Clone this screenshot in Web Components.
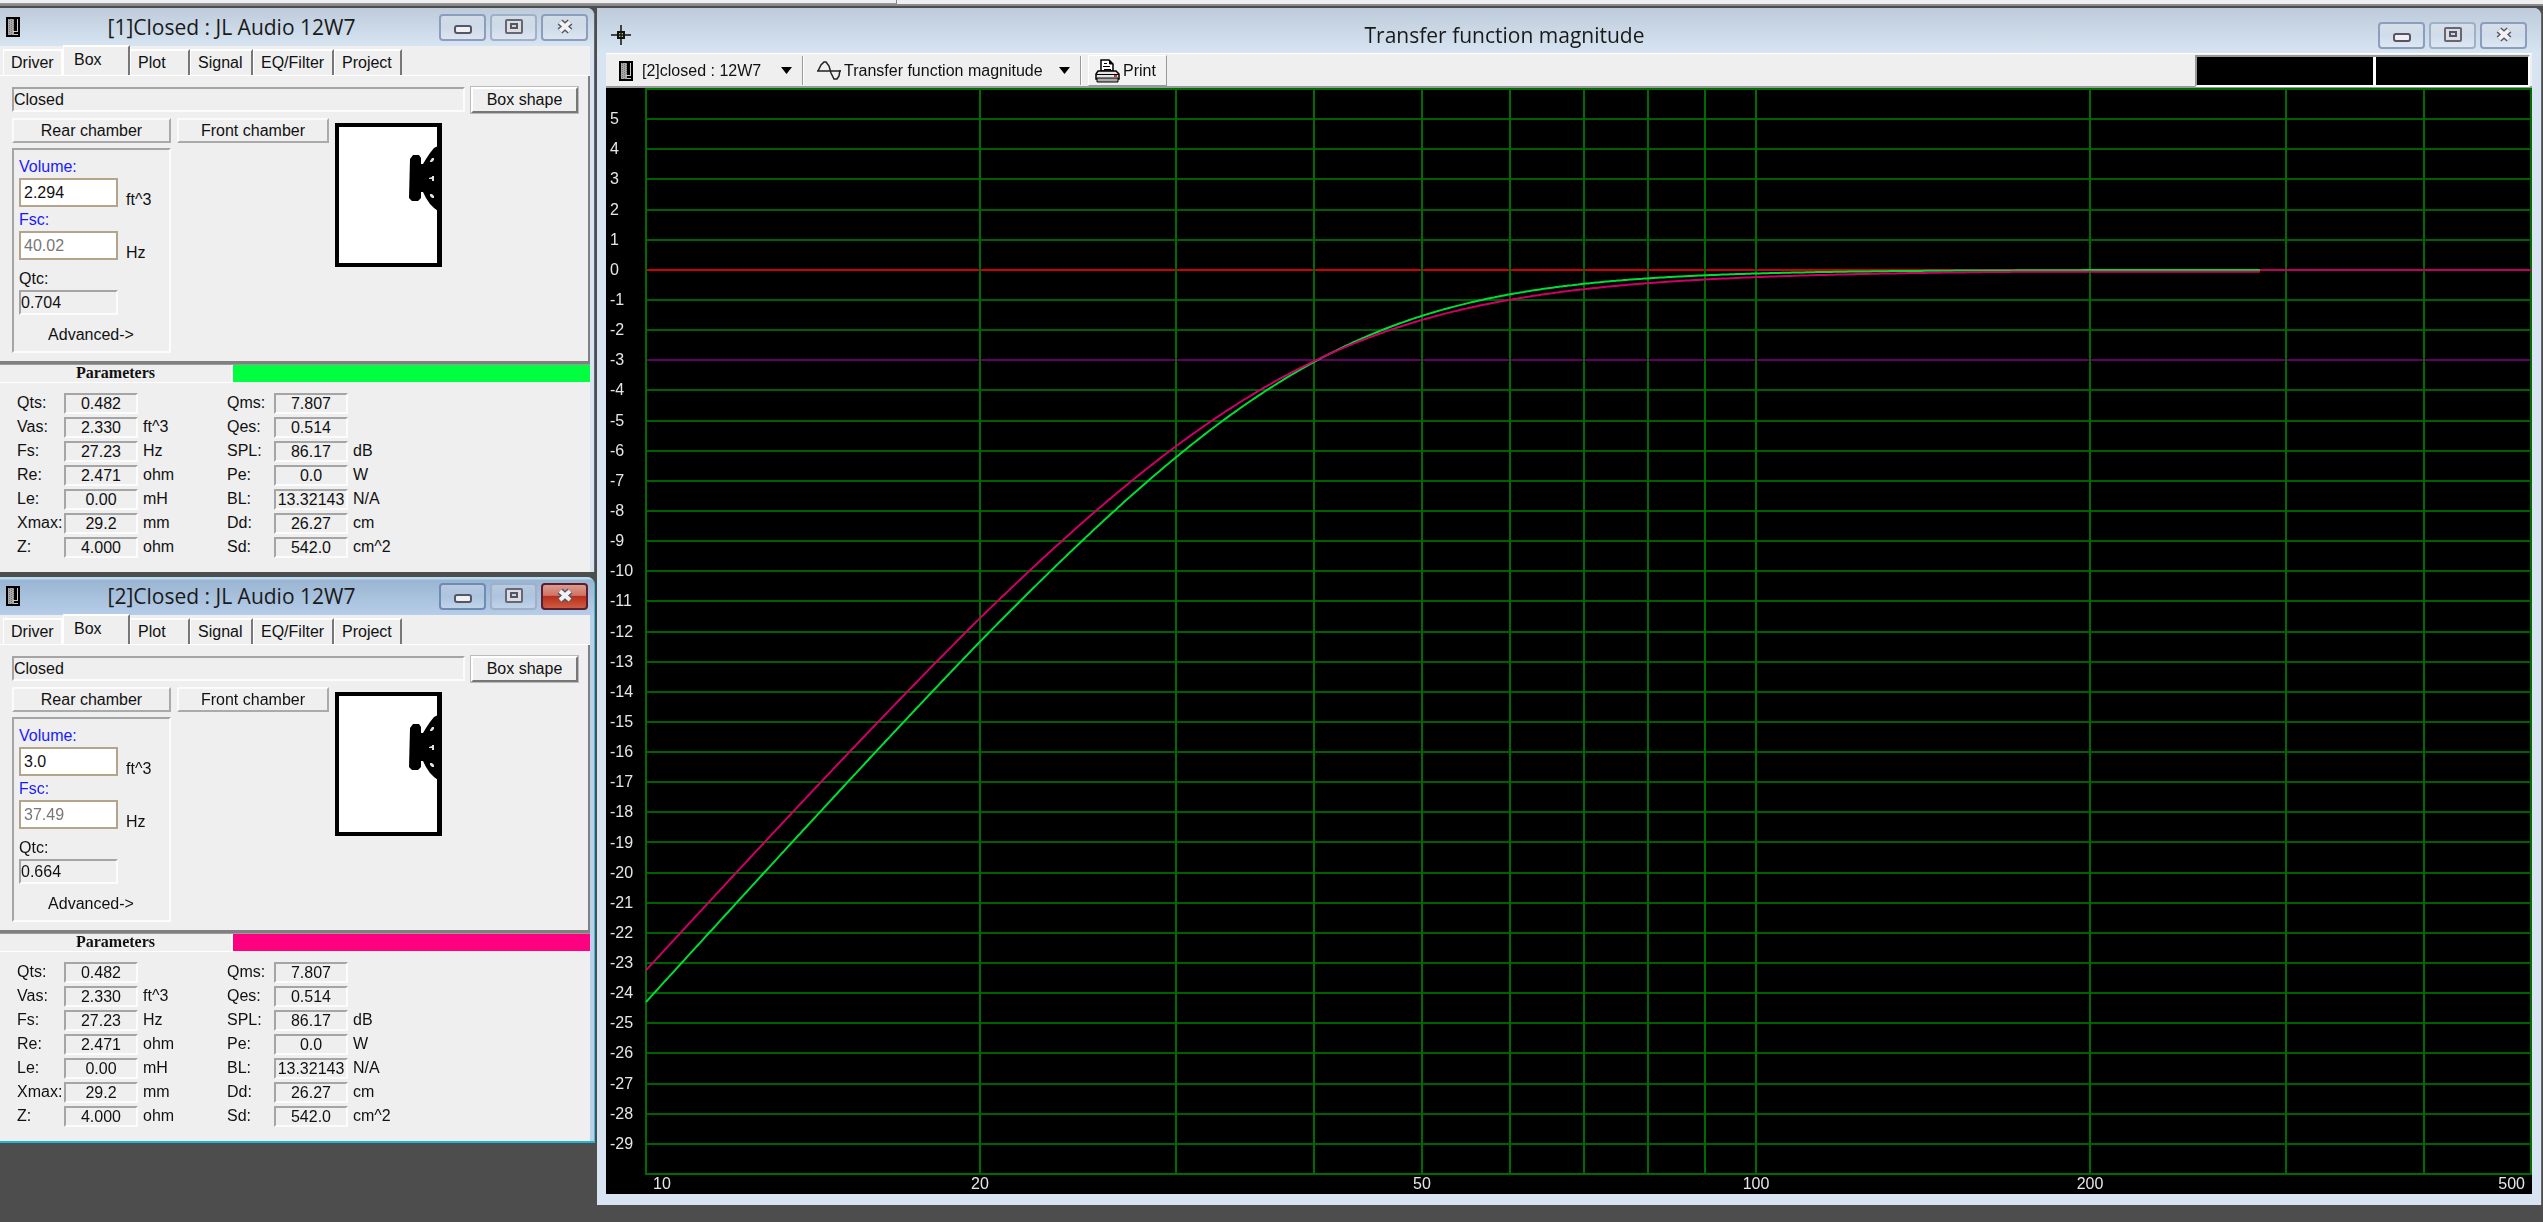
<!DOCTYPE html>
<html lang="en">
<head>
<meta charset="utf-8">
<title>Transfer function magnitude</title>
<style>
html,body{margin:0;height:100%;background:#4d4d4d}
body{font:16px/20px "Liberation Sans",Arial,sans-serif;color:#111;overflow:hidden}
</style>
</head>
<body>
<speaker-desktop></speaker-desktop>
<script>
const cabinetIcon = `<svg width="14" height="20" viewBox="0 0 14 20"><path fill="#000" d="M0 0h14v20H0z"/><path fill="#a8a8a8" d="M2 2h6v16H2z"/><path fill="#ccc" d="M11 2h1v12h-1zM7 14h5v1H7zM8 17h4v1H8z"/><path stroke="#777" stroke-width="1" stroke-dasharray="1 1" d="M3.500 2v16M5.500 3v15M7.500 2v12"/></svg>`;
const crossIcon = `<svg width="20" height="20" viewBox="0 0 20 20"><path stroke="#111" stroke-width="1.500" d="M10 0v20M0 10h20"/><path fill="none" stroke="#111" stroke-width="2" d="M7 7h6v6H7z"/><path fill="#c8b832" d="M8 8h1v1H8zM11 8h1v1h-1zM8 11h1v1H8zM11 11h1v1h-1z"/></svg>`;

function define(name, markup, setup) {
  const t = document.createElement('template');
  t.innerHTML = markup;
  customElements.define(name, class extends HTMLElement {
    constructor() { super(); this.attachShadow({ mode: 'open' }); }
    connectedCallback() {
      if (this.shadowRoot.childNodes.length) return;
      this.shadowRoot.append(t.content.cloneNode(true));
      if (setup) setup(this, this.shadowRoot);
    }
  });
}

/* A child window: title bar with caption buttons, and its content in a slot */
define('mdi-window', `
<style>
:host{--bar:linear-gradient(#becbda,#d7e4f2);--edge:#d8e4f2;--rim:#63676c;--pad:4px;--btn:#8d9dbd;display:flex;flex-direction:column;box-sizing:border-box;
 border-right:1px solid var(--rim);background:var(--edge);padding-right:var(--pad);border-radius:0 8px 0 0}
:host([active]){--bar:linear-gradient(#b9d9ee 0 2px,#9ab5d2 3px,#b6cde8);--edge:#b9d1ea;--rim:#2fc4dd;--btn:#6f8bb3;border-bottom:2px solid #20b4d0}
header{display:flex;align-items:center;height:38px;box-sizing:border-box;padding:0 2px 0 6px;background:var(--bar);margin-right:calc(-1*var(--pad));padding-right:calc(var(--pad) + 2px);border-radius:0 7px 0 0}
:host([wide]){--pad:9px;padding:0 9px 11px 9px;border-radius:8px 8px 0 0}
:host([wide]) header{height:45px;margin-left:-9px;padding:9px 14px 0 14px}
.icon{display:flex;width:18px}
:host([wide]) .icon{width:20px}
h1{flex:1;margin:0;font:21px/26px "Open Sans","Noto Sans",sans-serif;text-align:center;color:#1a1a1a;white-space:nowrap}
nav{display:flex;gap:4px}
button{width:47px;height:27px;padding:0;display:grid;place-items:center;border:2px solid var(--btn);border-radius:4px;background:linear-gradient(#ffffff44,#ffffff11 50%,#ffffff33)}
button:nth-child(2){border-color:#a0b0c6}
:host([active]) .close{border-color:#5b1e2c;background:linear-gradient(#dc9b8f,#cf7465 45%,#b8301b 50%,#ce5b43)}
::slotted(*){flex:1}
</style>
<header><span class="icon"></span><h1></h1><nav>
<button aria-label="Minimize"><svg width="18" height="14"><rect x="1" y="6" width="16" height="7" rx="2" fill="#f0f0f0" stroke="#555568" stroke-width="2"/></svg></button>
<button aria-label="Maximize"><svg width="18" height="16"><rect x="1" y="1" width="16" height="13" rx="1" fill="#ddd" stroke="#666678" stroke-width="2"/><rect x="6" y="5" width="6" height="4" fill="#c8d6e8" stroke="#555568" stroke-width="2"/></svg></button>
<button class="close" aria-label="Close"><svg width="18" height="16"><path d="M4 3l10 9M14 3L4 12" stroke="#555568" stroke-width="7"/><path d="M4 3l10 9M14 3L4 12" stroke="#f2f2f2" stroke-width="4"/></svg></button>
</nav></header><slot></slot>`, (el, root) => {
  root.querySelector('h1').textContent = el.getAttribute('caption');
  root.querySelector('.icon').innerHTML = el.hasAttribute('wide') ? crossIcon : cabinetIcon;
});

/* One label, sunken value and unit of the driver parameters */
define('param-value', `
<style>
:host{display:grid;grid-template-columns:47px 74px 1fr;align-items:center;height:24px;white-space:nowrap}
output{box-sizing:border-box;height:21px;border:2px solid;border-color:#a5a5a5 #fcfcfc #fcfcfc #a5a5a5;text-align:center;line-height:18px;display:flex;justify-content:center}
.unit{padding-left:5px}
</style>
<label for="v"></label><output id="v"></output><span class="unit"></span>`, (el, root) => {
  root.querySelector('label').textContent = el.getAttribute('name') + ':';
  root.querySelector('output').textContent = el.getAttribute('value');
  root.querySelector('.unit').textContent = el.getAttribute('unit') || '';
});

/* Cross section of the cabinet with its driver */
define('box-picture', `
<style>:host{display:block;width:107px;height:144px}svg{display:block}</style>
<svg width="107" height="144" viewBox="0 0 107 144"><path fill="#fff" stroke="#000" stroke-width="4" d="M2 2h102v140H2z"/><path d="M102 0h5v144h-5z"/>
<path d="M75 36l3-4h6l2 3v6h2l3-5 4-6 4-5 4-2v65l-4-3-4-4-4-6-3-6h-2v6l-3 3h-6l-3-3z"/>
<path fill="#e0e0e0" d="M95 38l2-3h2v2l-2 2h-2zM94 55l3-1v-1h2v5h-2v-2h-3zM95 71h2l2 2v2h-2l-2-2z"/></svg>`);

/* Box page with its tabs, chamber fields and driver parameters */
define('box-editor', `
<style>
:host{display:block;background:#efefef}
.tabs{display:flex;align-items:flex-end;height:30px;padding-left:3px;border-bottom:1px solid #fff;box-sizing:border-box}
.tabs button{font:inherit;color:inherit;background:#efefef;border:0;border-top:2px solid #fff;border-left:1px solid #fff;border-right:2px solid #777;height:26px;box-sizing:border-box;padding:0 0 0 7px;text-align:left;white-space:nowrap}
.tabs button:first-child{border-right-color:#fff;width:60px}
.tabs .on{height:30px;width:67px;padding:0 0 3px 10px}
.w60{width:60px}.w63{width:63px}.w81{width:81px}.w68{width:68px}
.page{border-right:2px solid #808080;border-bottom:3px solid #808080;padding:11px 10px 10px 12px;box-sizing:border-box;height:288px}
.row{display:flex}
.sunk{border:2px solid;border-color:#a5a5a5 #fcfcfc #fcfcfc #a5a5a5;box-sizing:border-box}
.kind{flex:1;height:25px;line-height:22px}
.shape{font:inherit;color:inherit;width:107px;height:26px;margin-left:6px;padding:0;background:#efefef;border:2px solid;border-color:#fff #777 #777 #fff;outline:1px solid #bbb;outline-offset:0}
.chambers{gap:6px;margin-top:5px;align-items:flex-start}
.raise{font:inherit;color:inherit;height:25px;box-sizing:border-box;padding:0;background:#efefef;border:2px solid;border-color:#fbfbfb #aaa #aaa #fbfbfb}
.rear{width:159px}.front{width:152px}
.column{display:flex;flex-direction:column;gap:5px}
.group{width:159px;height:205px;padding:6px 6px 0 5px;display:flex;flex-direction:column}
.group label{line-height:22px}
.blue{color:#1a1aff}
.group .row{align-items:flex-end;height:31px;gap:8px;line-height:18px}
input{font:inherit;color:#111;box-sizing:border-box;width:99px;height:29px;margin-bottom:2px;border:2px solid #b4a48c;background:#fff;padding:0 3px;outline:0}
input:disabled{color:#777}
.qtc{width:99px;height:25px;line-height:22px}
.gap{margin-top:6px}
.adv{font:inherit;color:inherit;border:0;background:none;padding:0;margin-top:10px}
box-picture{margin-top:5px}
.bar{display:flex;height:18px;border-top:1px solid #999}
.bar b{flex:0 0 231px;font:bold 16px/16px "Liberation Serif",serif;text-align:center;border-bottom:1px solid #fff;border-right:2px solid #fff}
.bar i{flex:1;margin-bottom:1px;background:var(--curve)}
.params{display:grid;grid-template-columns:210px 1fr;padding:8px 0 13px 17px}
</style>
<div class="tabs" role="tablist"><button role="tab">Driver</button><button role="tab" class="on" aria-selected="true">Box</button><button role="tab" class="w60">Plot</button><button role="tab" class="w63">Signal</button><button role="tab" class="w81">EQ/Filter</button><button role="tab" class="w68">Project</button></div>
<div class="page">
 <div class="row"><div class="sunk kind">Closed</div><button class="shape">Box shape</button></div>
 <div class="row chambers">
  <div class="column"><button class="raise rear">Rear chamber</button>
   <div class="sunk group">
    <label class="blue" for="vol">Volume:</label><div class="row"><input id="vol"><span>ft^3</span></div>
    <label class="blue" for="fsc">Fsc:</label><div class="row"><input id="fsc" disabled><span>Hz</span></div>
    <label class="gap" for="qtc">Qtc:</label><output class="sunk qtc" id="qtc"></output>
    <button class="adv">Advanced-&gt;</button>
   </div></div>
  <button class="raise front">Front chamber</button>
  <box-picture></box-picture>
 </div>
</div>
<div class="bar"><b>Parameters</b><i></i></div>
<div class="params"></div>`, (el, root) => {
  root.getElementById('vol').value = el.getAttribute('volume');
  root.getElementById('fsc').value = el.getAttribute('fsc');
  root.getElementById('qtc').textContent = el.getAttribute('qtc');
  const rows = [['Qts','0.482',''],['Qms','7.807',''],['Vas','2.330','ft^3'],['Qes','0.514',''],['Fs','27.23','Hz'],['SPL','86.17','dB'],['Re','2.471','ohm'],['Pe','0.0','W'],['Le','0.00','mH'],['BL','13.32143','N/A'],['Xmax','29.2','mm'],['Dd','26.27','cm'],['Z','4.000','ohm'],['Sd','542.0','cm^2']];
  root.querySelector('.params').innerHTML = rows.map(r => `<param-value name="${r[0]}" value="${r[1]}" unit="${r[2]}"></param-value>`).join('');
  if (el.hasAttribute('editing')) {
    const v = root.getElementById('vol');
    v.focus();
    v.setSelectionRange(v.value.length, v.value.length);
  }
});

define('plot-toolbar', `
<style>
:host{display:flex;align-items:center;flex:none;height:35px;background:#efefef;border-top:1px solid #fff;border-bottom:2px solid #999;box-sizing:border-box;padding:1px 2px 0 13px;white-space:nowrap}
svg{flex:none}
.pick{position:relative;display:flex;align-items:center;gap:9px}
.tight{gap:3px}
select{appearance:none;font:inherit;color:inherit;border:0;background:none;padding:0 30px 0 0;outline:0}
.tight select{padding-right:27px}
.caret{position:absolute;right:0;width:11px;height:7px;pointer-events:none}
.sep{width:1px;height:29px;background:#999;border-right:1px solid #fff;margin:0 13px 0 10px}
.sep.near{margin-right:6px}
button{font:inherit;color:inherit;display:flex;align-items:center;gap:3px;height:31px;padding:0 10px 0 6px;border:1px solid;border-color:#fff #999 #999 #fff;background:#f2f2f2}
.readout{margin-left:auto;display:flex;gap:3px;height:28px;background:#fff;border:2px solid;border-color:#999 #fff #fff #999;width:331px}
.readout span{background:#000;flex:177}
.readout span+span{flex:153}
</style>
<div class="pick">${cabinetIcon}<select aria-label="Project"><option>[2]closed : 12W7</option></select><svg class="caret" viewBox="0 0 11 7"><path d="M0 0h11L5.500 7z"/></svg></div>
<i class="sep"></i>
<div class="pick tight"><svg width="24" height="20" viewBox="0 0 24 20"><path fill="none" stroke="#222" stroke-width="1.500" d="M0 10h24M1 10l3-6 3-3h2l3 4 2 7 3 6h3l2-3 1-6"/></svg><select aria-label="Graph"><option>Transfer function magnitude</option></select><svg class="caret" viewBox="0 0 11 7"><path d="M0 0h11L5.500 7z"/></svg></div>
<i class="sep near"></i>
<button><svg width="25" height="24" viewBox="0 0 25 24"><path fill="#fff" stroke="#000" stroke-width="1.500" d="M6 12V1h8l4 4v7z"/><path stroke="#000" d="M9 4.500h3M8 7.500h7M9 10.500h7M14.500 1v4H18"/><path fill="#e4e4e4" stroke="#000" stroke-width="1.500" d="M3 12h18l3 3v5H1v-5z"/><path fill="#aaa" stroke="#000" stroke-width="1" d="M2 19h21v4H2z"/><path stroke="#000" d="M1 15.500h23"/><path fill="#e03030" d="M19 16h3v2h-3z"/></svg>Print</button>
<div class="readout"><span></span><span></span></div>`);

/* Magnitude plot, 6 to -30 dB over a logarithmic 10 to 500 Hz axis */
define('transfer-graph', `
<style>
:host{display:grid;grid-template:minmax(0,1fr) 20px / 40px minmax(0,1fr);background:#000;color:#e6e6e6;padding-top:1px;min-height:0}
.db{display:flex;flex-direction:column}
.db::before,.db::after{content:"";flex:1}
.db span{flex:2 2 0;min-height:0;display:flex;align-items:center;padding-left:4px;line-height:16px}
svg{display:block;width:100%;height:100%;overflow:visible;shape-rendering:crispEdges}
svg *{vector-effect:non-scaling-stroke;fill:none;stroke-width:2}
svg .curve{shape-rendering:auto}
.hz{grid-column:2;display:flex}
.hz span{flex:var(--w) 1 0;min-width:0;text-align:center}
.hz span:first-child{text-align:left;text-indent:7px}
.hz span:last-child{text-align:right}
.hz span:last-child::after{content:"";display:inline-block;width:7px}
</style>
<div class="db"></div><svg viewBox="0 0 1886 1085" preserveAspectRatio="none"></svg>
<div class="hz"><span style="--w:134">10</span><span style="--w:400">20</span><span style="--w:484">50</span><span style="--w:184">100</span><span style="--w:484">200</span><span style="--w:200">500</span></div>`, (el, root) => {
  const X = f => 1110 * Math.log10(f / 10), Y = d => (6 - d) * 1085 / 36;
  let labels = '', art = '';
  for (let d = 5; d >= -29; d--) {
    labels += `<span>${d}</span>`;
    const c = d === 0 ? '#d00000' : d === -3 ? '#640064' : '#006000';
    art += `<path stroke="${c}" d="M0 ${Math.round(Y(d))}H1886"/>`;
  }
  for (const f of [20,30,40,50,60,70,80,90,100,200,300,400]) art += `<path stroke="#006c00" d="M${Math.round(X(f))} 0V1085"/>`;
  art += '<path stroke="#006c00" d="M0 0H1885V1085H0z"/>';
  const curve = (fc, q, colour, floor, end) => {
    let p = '';
    for (let x = 0; x <= X(end); x += 2) {
      const r = 10 * Math.pow(10, x / 1110) / fc;
      const loss = 0.18 * Math.max(0, 1 - x / X(20));
      const d = 20 * Math.log10(r * r / Math.hypot(1 - r * r, r / q)) - loss;
      p += `${p ? 'L' : 'M'}${x} ${Math.max(Y(d), Y(0) + floor).toFixed(1)}`;
    }
    return `<path class="curve" stroke="${colour}" d="${p}"/>`;
  };
  art += curve(40.02, 0.704, '#00dc38', 0, 285) + curve(37.49, 0.664, '#cc0066', 2, 285);
  art += `<path stroke="#c00060" d="M${X(285)} ${Math.round(Y(0))}H1886"/>`;
  root.querySelector('.db').innerHTML = labels;
  root.querySelector('svg').innerHTML = art;
});

define('speaker-desktop', `
<style>
:host{display:flex;flex-direction:column;height:100vh}
.strip{height:4px;flex:none;background:#efefef;border-bottom:2px solid #8a8a8a;margin-bottom:2px;display:flex}
.strip i{width:897px;box-sizing:border-box;border-right:1px solid #888;border-bottom:1px solid #999}
main{flex:1;min-height:0;display:grid;grid-template-columns:595px minmax(0,1fr);gap:2px;padding:0 1px 17px 0}
.stack{display:flex;flex-direction:column;gap:5px}
.plot{display:flex;flex-direction:column;min-height:0}
transfer-graph{flex:1}
</style>
<div class="strip"><i></i></div>
<main>
<div class="stack">
<mdi-window caption="[1]Closed : JL Audio 12W7"><box-editor volume="2.294" fsc="40.02" qtc="0.704" style="--curve:#00ff40"></box-editor></mdi-window>
<mdi-window active caption="[2]Closed : JL Audio 12W7"><box-editor editing volume="3.0" fsc="37.49" qtc="0.664" style="--curve:#ff0080"></box-editor></mdi-window>
</div>
<mdi-window wide caption="Transfer function magnitude"><div class="plot"><plot-toolbar></plot-toolbar><transfer-graph></transfer-graph></div></mdi-window>
</main>`);
</script>
</body>
</html>
